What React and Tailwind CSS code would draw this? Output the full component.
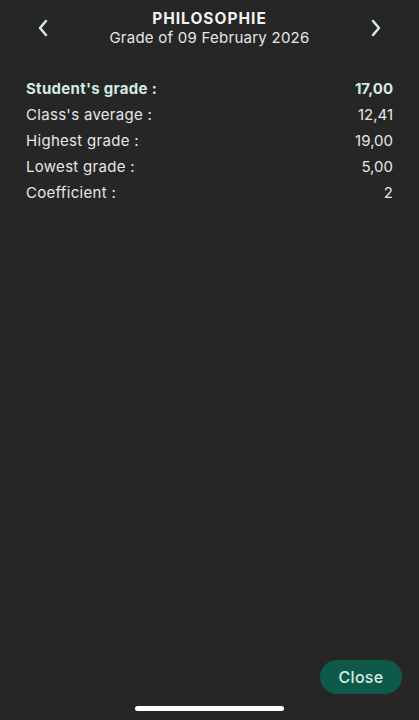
import React from "react";

function Chevron({ dir }) {
  return (
    <svg width="14" height="20" viewBox="0 0 14 20" fill="none">
      <path
        d={dir === "left" ? "M10 3 L4 10 L10 17" : "M4 3 L10 10 L4 17"}
        stroke="#d3ebe2"
        strokeWidth="2.5"
        strokeLinecap="round"
        strokeLinejoin="round"
      />
    </svg>
  );
}

const rows = [
  ["Class's average :", "12,41"],
  ["Highest grade :", "19,00"],
  ["Lowest grade :", "5,00"],
  ["Coefficient :", "2"],
];

export default function App() {
  return (
    <div
      className="w-[419px] h-[720px] bg-[#262626] flex flex-col relative overflow-hidden"
      style={{ fontFamily: "Inter, 'Open Sans', sans-serif" }}
    >
      <div className="flex items-center justify-between px-[36px] pt-[9px]">
        <Chevron dir="left" />
        <div className="flex flex-col items-center">
          <div className="text-[15.5px] leading-[19px] font-bold text-[#f2f2f2] tracking-[1px]">PHILOSOPHIE</div>
          <div className="text-[15px] leading-[19px] text-[#e6e6e6] tracking-[0.25px]">Grade of 09 February 2026</div>
        </div>
        <Chevron dir="right" />
      </div>

      <div className="flex flex-col px-[26px] pt-[29px]">
        <div className="flex justify-between h-[26px] items-center text-[15px] font-bold text-[#d3ebe2]">
          <span className="tracking-[0.3px]">Student's grade :</span>
          <span>17,00</span>
        </div>
        {rows.map(([l, v]) => (
          <div key={l} className="flex justify-between h-[26px] items-center text-[15px] text-[#e6e6e6]">
            <span className="tracking-[0.3px]">{l}</span>
            <span>{v}</span>
          </div>
        ))}
      </div>

      <div className="flex-1" />
      <div className="flex justify-end px-[17px]">
        <button className="w-[82px] h-[34px] rounded-full bg-[#0d5a4a] text-[#d7ede4] text-[16px] font-medium tracking-[0.3px]">
          Close
        </button>
      </div>
      <div className="flex justify-center pt-[12px] pb-[9px]">
        <div className="w-[149px] h-[5px] rounded-full bg-white" />
      </div>
    </div>
  );
}
